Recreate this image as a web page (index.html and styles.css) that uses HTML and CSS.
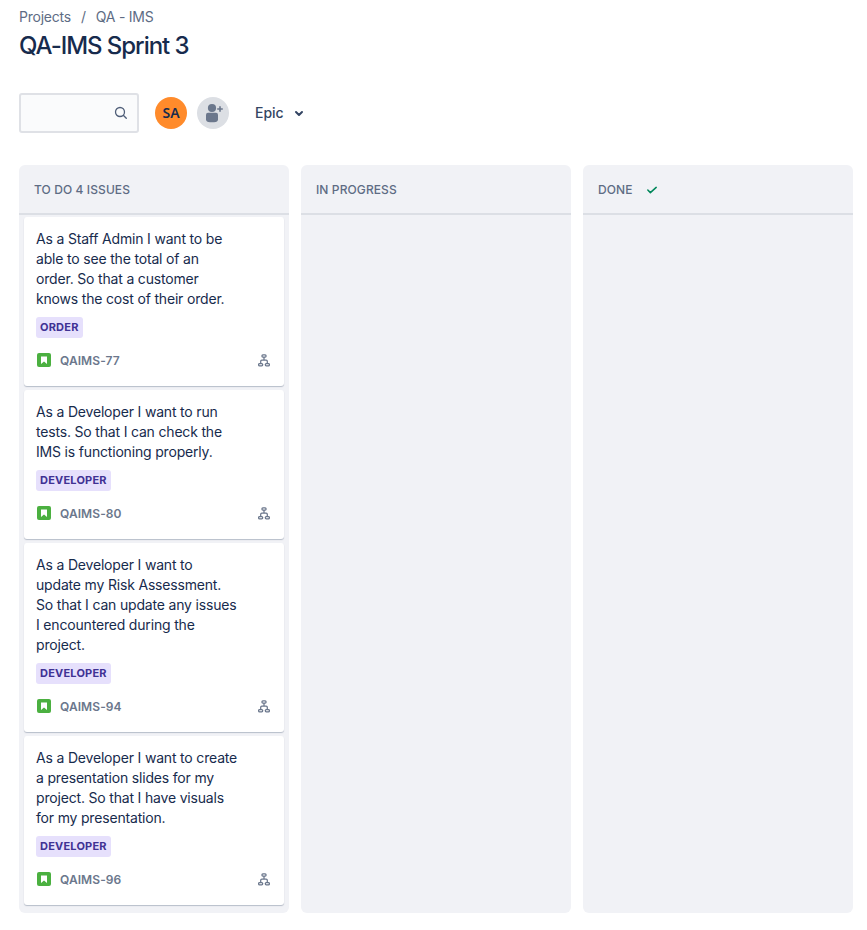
FILE: index.html
```html
<!DOCTYPE html>
<html lang="en">
<head>
<meta charset="utf-8">
<title>QA-IMS Sprint 3</title>
<link rel="stylesheet" href="styles.css">
</head>
<body>
<svg class="defs" aria-hidden="true">
  <symbol id="story" viewBox="0 0 14 14"><rect width="14" height="14" rx="2" fill="#4bb040"/><path d="M4 3.4h6v7.6L7 8.5 4 11z" fill="#fff"/></symbol>
  <symbol id="tree" viewBox="0 0 12 13"><g fill="none" stroke="#6b778c" stroke-width="1.25"><rect x="3.9" y=".9" width="4.2" height="2.2" rx="1"/><rect x=".6" y="9.6" width="4.1" height="2.2" rx="1"/><rect x="7.3" y="9.6" width="4.1" height="2.2" rx="1"/><path d="M6 3.1v3M2.7 9.6V7.3q0-1.1 1.1-1.1h4.4q1.1 0 1.1 1.1v2.3"/></g></symbol>
</svg>
<main class="page">
  <nav class="crumbs"><span>Projects</span><span class="slash">/</span><span>QA - IMS</span></nav>
  <h1>QA-IMS Sprint 3</h1>
  <div class="toolbar">
    <div class="search"><svg width="14" height="14" viewBox="0 0 14 14" fill="none" stroke="#505f79" stroke-width="1.3" stroke-linecap="round"><circle cx="6" cy="6" r="4.5"/><path d="M9.3 9.3l3 3"/></svg></div>
    <div class="avatar">SA</div>
    <div class="avatar add"><svg width="32" height="32" viewBox="0 0 32 32" fill="#6b778c"><circle cx="15" cy="11" r="4.1"/><path d="M9 17.8q0-2 2-2h8q2 0 2 2v4.4q0 3-4 3h-4q-4 0-4-3z"/><path d="M22.2 9.2h1.6v2h2v1.6h-2v2h-1.6v-2h-2v-1.6h2z"/></svg></div>
    <div class="filter">Epic<svg width="10" height="8" viewBox="0 0 10 8" fill="none" stroke="#344563" stroke-width="2" stroke-linecap="round" stroke-linejoin="round"><path d="M2 3l3 3 3-3"/></svg></div>
  </div>
  <div class="board">
    <section class="column">
      <h2>TO DO 4 ISSUES</h2>
      <div class="cards">
        <article class="card"><p>As a Staff Admin I want to be<br>able to see the total of an<br>order. So that a customer<br>knows the cost of their order.</p><span class="tag">ORDER</span><footer><svg class="story"><use href="#story"/></svg><span class="key">QAIMS-77</span><svg class="tree"><use href="#tree"/></svg></footer></article>
        <article class="card"><p>As a Developer I want to run<br>tests. So that I can check the<br>IMS is functioning properly.</p><span class="tag">DEVELOPER</span><footer><svg class="story"><use href="#story"/></svg><span class="key">QAIMS-80</span><svg class="tree"><use href="#tree"/></svg></footer></article>
        <article class="card"><p>As a Developer I want to<br>update my Risk Assessment.<br>So that I can update any issues<br>I encountered during the<br>project.</p><span class="tag">DEVELOPER</span><footer><svg class="story"><use href="#story"/></svg><span class="key">QAIMS-94</span><svg class="tree"><use href="#tree"/></svg></footer></article>
        <article class="card"><p>As a Developer I want to create<br>a presentation slides for my<br>project. So that I have visuals<br>for my presentation.</p><span class="tag">DEVELOPER</span><footer><svg class="story"><use href="#story"/></svg><span class="key">QAIMS-96</span><svg class="tree"><use href="#tree"/></svg></footer></article>
      </div>
    </section>
    <section class="column"><h2>IN PROGRESS</h2></section>
    <section class="column"><h2>DONE<svg width="12" height="10" viewBox="0 0 12 10" fill="none" stroke="#00875a" stroke-width="1.5" stroke-linecap="round" stroke-linejoin="round"><path d="M1.8 5l2.6 2.6 5.8-5.2"/></svg></h2></section>
  </div>
</main>
</body>
</html>
```
FILE: styles.css
```css
* { box-sizing: border-box; }
body { margin: 0; background: #fff; color: #172b4d; font: 14px/20px Inter, "Liberation Sans", sans-serif; }
.defs { display: none; }
svg { display: block; flex: none; }
.page { padding: 7px 14px 17px 19px; }
.crumbs { display: flex; color: #5e6c84; height: 20px; letter-spacing: -.24px; }
.slash { width: 25px; text-align: center; }
h1 { margin: 5px 0 0; font-size: 24px; line-height: 28px; font-weight: 500; letter-spacing: -1.05px; }
.toolbar { display: flex; align-items: center; margin-top: 33px; height: 40px; }
.search { width: 120px; height: 40px; border: 2px solid #dfe1e6; border-radius: 3px; background: #fafbfc; display: flex; align-items: center; justify-content: flex-end; padding-right: 9px; }
.avatar { width: 32px; height: 32px; border-radius: 50%; margin-left: 16px; background: #ff8b2b; color: #172b4d; font: 600 14px/32px "Noto Sans", sans-serif; text-align: center; }
.add { margin-left: 10px; background: #dcdfe4; }
.filter { margin-left: 26px; display: flex; align-items: center; gap: 10px; font-weight: 500; color: #344563; }
.board { display: flex; gap: 12px; margin-top: 32px; height: 748px; }
.column { width: 270px; border-radius: 6px; background: #f1f2f6; }
h2 { margin: 0; height: 50px; padding: 2px 0 0 15px; display: flex; align-items: center; gap: 13px; border-bottom: 2px solid #dcdfe5; font-size: 12px; line-height: 16px; font-weight: 500; letter-spacing: .1px; color: #5e6c84; }
.cards { display: flex; flex-direction: column; gap: 4px; padding: 2px 5px 0; }
.card { display: flex; flex-direction: column; align-items: flex-start; background: #fff; border-radius: 3px; padding: 12px 12px 18px; box-shadow: 0 1px 1px rgba(9,30,66,.25); }
p { margin: 0 0 8px; white-space: nowrap; letter-spacing: -.18px; }
.tag { height: 21px; padding: 0 4px; border-radius: 3px; background: #e6e0fc; color: #403294; font-size: 11px; line-height: 21px; font-weight: 700; letter-spacing: .2px; }
footer { display: flex; align-items: center; width: 100%; height: 16px; margin-top: 14px; font-size: 12px; line-height: 16px; font-weight: 600; color: #6b778c; }
.key { padding-top: 2px; letter-spacing: .08px; }
.story { width: 14px; height: 14px; margin: 0 9px 0 1px; }
.tree { width: 12px; height: 13px; margin: 0 2px 0 auto; }
```
